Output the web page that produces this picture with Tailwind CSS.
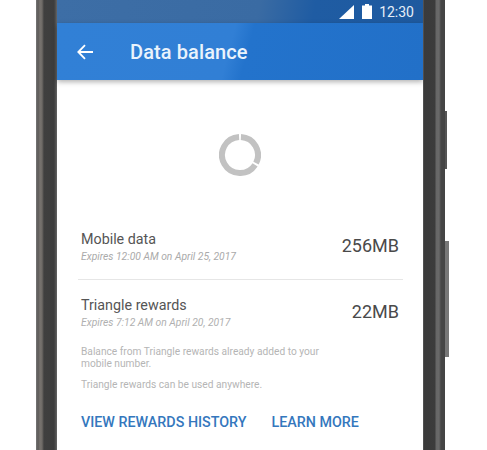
<!DOCTYPE html>
<html>
<head>
<meta charset="utf-8">
<script src="https://cdn.jsdelivr.net/npm/@tailwindcss/browser@4"></script>
</head>
<body class="bg-white">
<div class="w-[487px] h-[450px] overflow-hidden bg-white flex pl-[36px] font-['Roboto',sans-serif]">
  <div class="w-[21px] h-full shrink-0 bg-[linear-gradient(90deg,#777_0px,#5c5a58_2px,#77736f_4px,#6e6a66_6px,#3f3f3f_8px,#3d3d3d_18px,#555_20px,#666_21px)]"></div>
  <div class="w-[366px] h-full shrink-0 flex flex-col bg-white">
    <div class="h-[23px] shrink-0 flex items-center justify-end pr-[9px] bg-[linear-gradient(100deg,#3d6ea6_0%,#3a6ba3_55%,#1f5ca3_70%,#1e5a9f_100%)]">
      <svg class="w-[15px] h-[14px] mr-[8px]" viewBox="0 0 15 14"><path d="M0 14 L15 0 V14 Z" fill="#fff"/></svg>
      <svg class="w-[10px] h-[15px] mr-[7px]" viewBox="0 0 10 15"><path d="M3 0 H7 V1.5 H10 V15 H0 V1.5 H3 Z" fill="#fff"/></svg>
      <span class="text-[14px] leading-none text-[#e6eef7]">12:30</span>
    </div>
    <div class="h-[57px] shrink-0 flex items-center pl-[20px] shadow-[0_2px_5px_rgba(0,0,0,0.3)] relative bg-[linear-gradient(105deg,#3180d6_0%,#317fd5_47%,#2373cc_52%,#2270c8_100%)]">
      <svg class="w-[16px] h-[16px] mr-[37px]" viewBox="0 0 16 16" fill="none" stroke="#fff" stroke-width="1.8"><path d="M16 8 H1.5 M8 1.2 L1.3 8 L8 14.8"/></svg>
      <span class="text-[20px] leading-none font-medium text-[#eaf3fc] tracking-[0.1px]">Data balance</span>
    </div>
    <div class="flex justify-center pt-[54px] h-[141px] shrink-0">
      <svg class="w-[42px] h-[42px]" viewBox="0 0 42 42" fill="none" stroke="#c2c2c2" stroke-width="6">
        <path d="M21.94 3.03 A18 18 0 0 1 37.04 29.17"/>
        <path d="M36.1 30.8 A18 18 0 1 1 20.06 3.03"/>
      </svg>
    </div>
    <div class="flex items-center justify-between pl-[24px] pr-[24px] pb-[6px] h-[58px] shrink-0">
      <div>
        <div class="text-[14.3px] leading-[17px] text-[#555]">Mobile data</div>
        <div class="text-[10.3px] leading-[12px] mt-[3px] italic text-[#aaa]">Expires 12:00 AM on April 25, 2017</div>
      </div>
      <div class="text-[18px] leading-none text-[#4a4a4a] -mt-[2px]">256MB</div>
    </div>
    <div class="h-px shrink-0 bg-[#e6e6e6] ml-[21px] mr-[20px]"></div>
    <div class="flex items-center justify-between pl-[24px] pr-[24px] h-[57px] shrink-0 pt-[8px]">
      <div>
        <div class="text-[14.3px] leading-[17px] text-[#555]">Triangle rewards</div>
        <div class="text-[10.3px] leading-[12px] mt-[3px] italic text-[#b0b0b0]">Expires 7:12 AM on April 20, 2017</div>
      </div>
      <div class="text-[18px] leading-none text-[#4a4a4a] -mt-[2px]">22MB</div>
    </div>
    <div class="pl-[24px] pr-[100px] text-[10.2px] leading-[12px] text-[#b5b5b5] pt-[9px]">
      <p>Balance from Triangle rewards already added to your mobile number.</p>
      <p class="mt-[9px]">Triangle rewards can be used anywhere.</p>
    </div>
    <div class="flex pl-[24px] gap-[25px] mt-[23px] text-[14.3px] leading-[17px] font-medium text-[#3477bd]">
      <span>VIEW REWARDS HISTORY</span>
      <span>LEARN MORE</span>
    </div>
  </div>
  <div class="w-[22px] h-full shrink-0 relative bg-[linear-gradient(90deg,#666_0px,#3a3a3a_1px,#3c3c3c_12px,#666_13px,#6a6a6a_16px,#464646_18px,#444_22px)]">
    <div class="absolute left-[22px] top-[111px] w-[2px] h-[58px] bg-[#555]"></div>
    <div class="absolute left-[22px] top-[241px] w-[4px] h-[116px] bg-[#777]"></div>
  </div>
</div>
</body>
</html>
